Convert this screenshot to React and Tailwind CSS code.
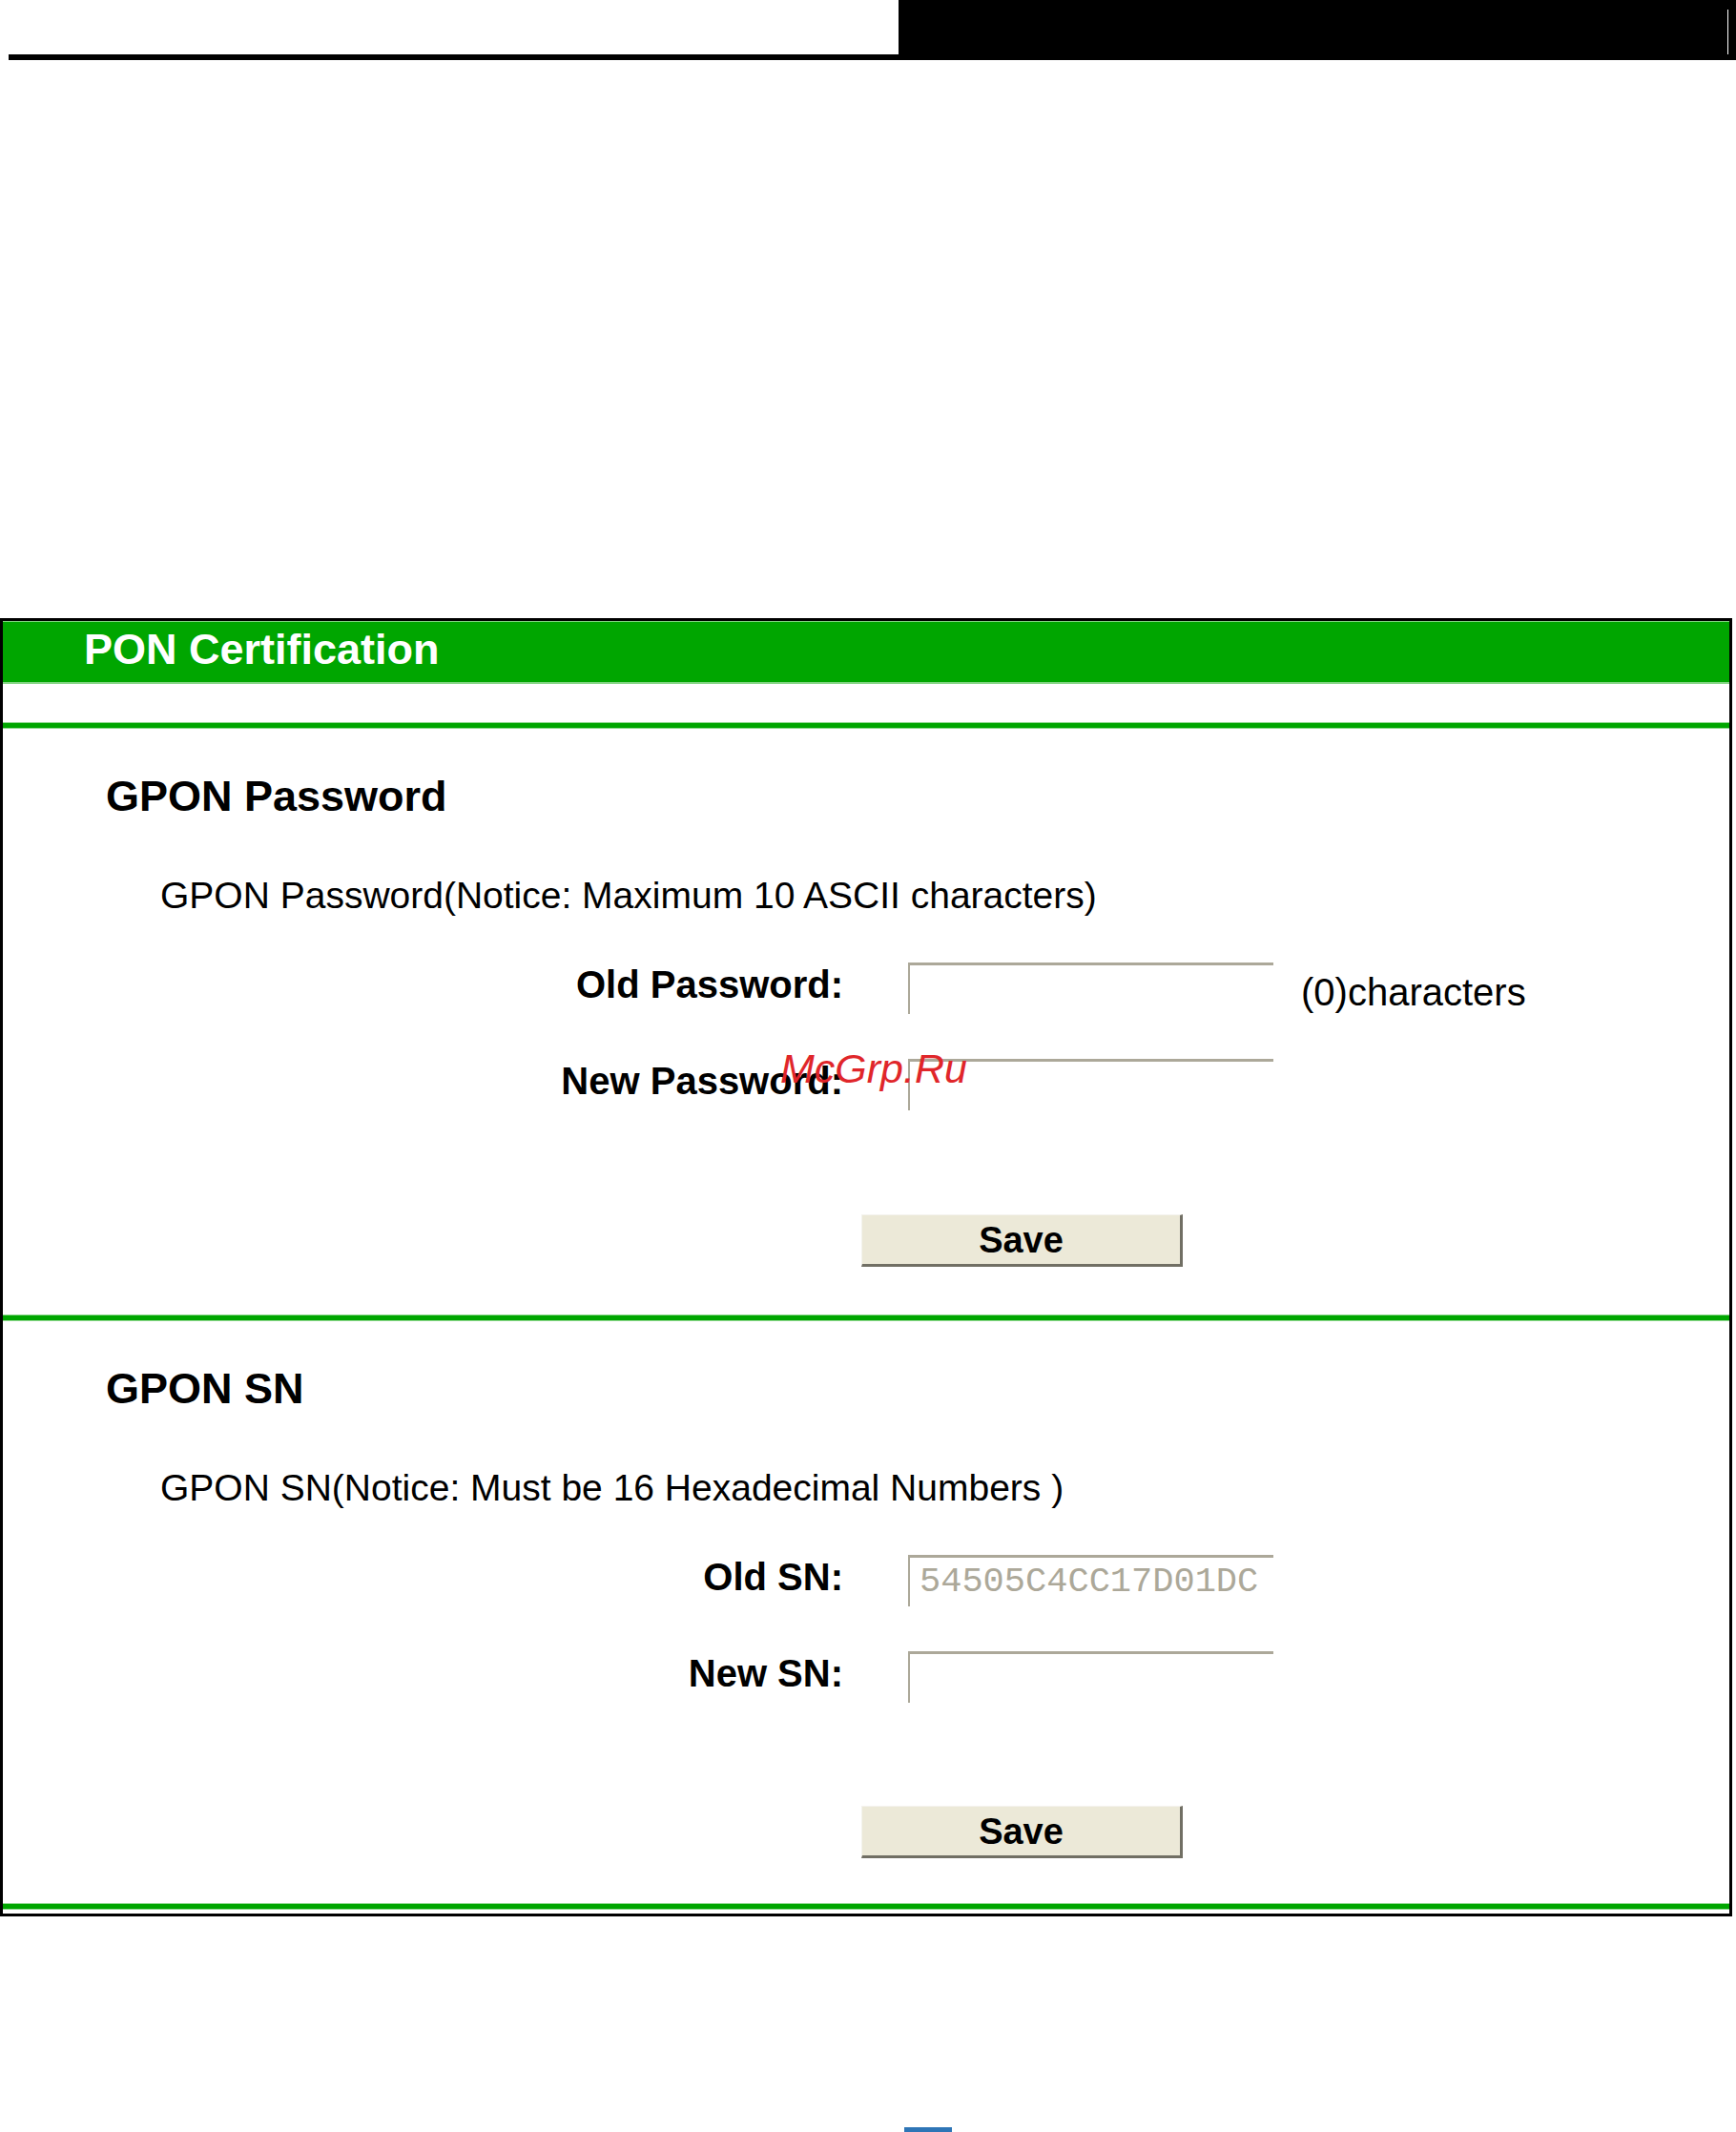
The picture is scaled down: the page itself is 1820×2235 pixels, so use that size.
import React from 'react';

const sans = { fontFamily: '"Liberation Sans", Arial, sans-serif' };

function GreenRule() {
  return <div className="h-[7px] bg-[#00a600] border-y-[1.5px] border-[#8fd88f]" />;
}

function FieldRow({ label, value, note, className = '' }) {
  return (
    <div className={`flex items-start ${className}`}>
      <div className="w-[881px] mt-[3px] h-[40px] leading-[40px] text-right text-[40px] font-bold text-black">
        {label}
      </div>
      <input
        readOnly={value !== undefined}
        defaultValue={value}
        className="ml-[68px] w-[383px] h-[54px] bg-white border-t-[3px] border-l-[2px] border-[#aca899] outline-none pl-[10px] text-[37px] text-[#aca899]"
        style={{ fontFamily: '"Liberation Mono", "Courier New", monospace' }}
      />
      {note && (
        <div className="ml-[29px] mt-[11px] h-[40px] leading-[40px] text-[40px] text-black">{note}</div>
      )}
    </div>
  );
}

function SaveButton({ className = '' }) {
  return (
    <button
      className={`ml-[900px] w-[337px] h-[55px] bg-[#ece9d8] border-t border-l border-[#f4f3ee] border-r-[3px] border-b-[3px] border-r-[#716f64] border-b-[#716f64] text-[38px] font-bold text-black leading-none ${className}`}
    >
      Save
    </button>
  );
}

function Section({ title, notice, children }) {
  return (
    <div className="flex flex-col">
      <div className="mt-[48px] pl-[108px] h-[45px] leading-[45px] text-[45px] font-bold text-black">{title}</div>
      <div className="mt-[62px] pl-[165px] h-[40px] leading-[40px] text-[39px] text-black">{notice}</div>
      {children}
    </div>
  );
}

export default function App() {
  return (
    <div className="relative w-[1820px] h-[2235px] bg-white overflow-hidden" style={sans}>
      {/* top strip */}
      <div className="flex h-[63px]">
        <div className="w-[942px] pl-[9px] flex flex-col justify-end">
          <div className="h-[6px] bg-black" />
        </div>
        <div className="flex-1 bg-black flex justify-end pr-[8px] pt-[10px] pb-[6px]">
          <div className="w-px bg-white" />
        </div>
      </div>

      {/* panel */}
      <div className="relative mt-[585px] w-[1816px] border-[3px] border-black">
        <div className="h-[66px] bg-[#00a600] border-t border-b-2 border-t-[#7fd27f] border-b-[#86d586] flex items-center pl-[85px] pb-[6px]">
          <span className="text-[45px] font-bold text-white leading-none">PON Certification</span>
        </div>
        <div className="h-[40px]" />
        <GreenRule />

        <Section title="GPON Password" notice="GPON Password(Notice: Maximum 10 ASCII characters)">
          <FieldRow className="mt-[50px]" label="Old Password:" note="(0)characters" />
          <FieldRow className="mt-[47px]" label="New Password:" />
          <SaveButton className="mt-[109px]" />
          <div className="h-[50px]" />
        </Section>
        <GreenRule />

        <Section title="GPON SN" notice="GPON SN(Notice: Must be 16 Hexadecimal Numbers )">
          <FieldRow className="mt-[50px]" label="Old SN:" value="54505C4CC17D01DC" />
          <FieldRow className="mt-[47px]" label="New SN:" />
          <SaveButton className="mt-[108px]" />
          <div className="h-[47px]" />
        </Section>
        <GreenRule />
        <div className="h-[4px]" />

        {/* watermark */}
        <div className="absolute left-[815px] top-[448px] text-[43px] italic text-[#e0262a] leading-none">
          McGrp.Ru
        </div>
      </div>

      {/* bottom mark */}
      <div className="absolute left-[948px] bottom-0 w-[50px] h-[5px] bg-[#2e75b6]" />
    </div>
  );
}
